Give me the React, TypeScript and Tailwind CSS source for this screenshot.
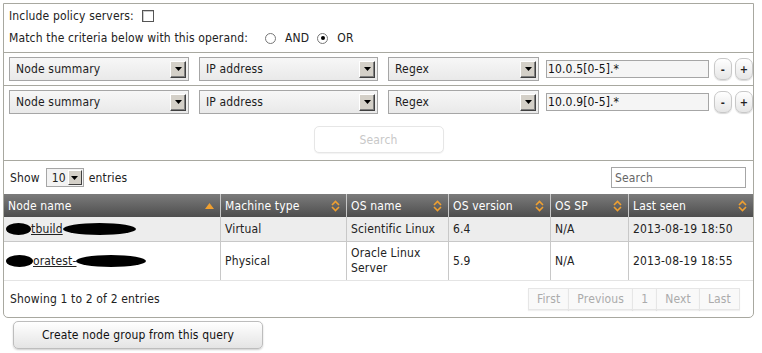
import React from 'react'

const font = { fontFamily: '"DejaVu Sans Condensed", "Liberation Sans", sans-serif' }

function Arrow() {
  return (
    <div className="flex h-[17px] w-[16px] items-center justify-center border border-t-white border-l-white border-b-[#404040] border-r-[#404040] bg-[#d4d0c8] shadow-[inset_-1px_-1px_0_#808080]">
      <svg width="7" height="4" viewBox="0 0 7 4">
        <path d="M0 0H7L3.5 4Z" fill="#000" />
      </svg>
    </div>
  )
}

function Select({ label, width }: { label: string; width: string }) {
  return (
    <div className={`flex h-[24px] ${width} items-center justify-between border border-[#a6a6a6] bg-gradient-to-b from-[#f7f7f7] to-[#e9e9e9] pl-[6px] pr-[2px] text-[12px] text-[#1c1c1c]`}>
      <span>{label}</span>
      <Arrow />
    </div>
  )
}

function RoundBtn({ children }: { children: React.ReactNode }) {
  return (
    <div className="flex h-[22px] w-[18px] items-center justify-center rounded-[7px] border border-[#c8c8c8] bg-gradient-to-b from-white to-[#e6e6e6] text-[11px] font-bold leading-none text-[#222] shadow-[0_1px_1px_rgba(0,0,0,0.15)]">
      {children}
    </div>
  )
}

function CriteriaRow({ value }: { value: string }) {
  return (
    <div className="flex items-center pl-[5px]">
      <Select label="Node summary" width="w-[180px]" />
      <div className="w-[10px]" />
      <Select label="IP address" width="w-[179px]" />
      <div className="w-[10px]" />
      <Select label="Regex" width="w-[151px]" />
      <div className="w-[7px]" />
      <div className="flex h-[18px] w-[163px] items-center border border-[#a6a6a6] bg-[#f5f5f5] pl-[1px] text-[12px] text-[#111]">
        {value}
      </div>
      <div className="w-[5px]" />
      <RoundBtn>-</RoundBtn>
      <div className="w-[3px]" />
      <RoundBtn>+</RoundBtn>
    </div>
  )
}

function SortIcon({ up }: { up?: boolean }) {
  if (up) {
    return (
      <svg width="9" height="6" viewBox="0 0 9 6">
        <path d="M0 6L4.5 0L9 6Z" fill="#f0a030" />
      </svg>
    )
  }
  return (
    <svg width="9" height="12" viewBox="0 0 9 12">
      <path d="M1 5L4.5 1.5L8 5" stroke="#f0a030" strokeWidth="1.6" fill="none" />
      <path d="M1 7L4.5 10.5L8 7" stroke="#f0a030" strokeWidth="1.6" fill="none" />
    </svg>
  )
}

const columns = [
  { name: 'Node name', w: 'w-[216px]', up: true },
  { name: 'Machine type', w: 'w-[126px]' },
  { name: 'OS name', w: 'w-[102px]' },
  { name: 'OS version', w: 'w-[102px]' },
  { name: 'OS SP', w: 'w-[78px]' },
  { name: 'Last seen', w: 'w-[125px]' },
]

// redacted parts of the host names
function Blob({ w }: { w: string }) {
  return <span className={`inline-block h-[12px] ${w} rounded-[50%] bg-black align-middle`} />
}

const rows = [
  {
    node: (
      <>
        <Blob w="w-[25px]" />
        <span>tbuild</span>
        <Blob w="w-[73px]" />
      </>
    ),
    type: 'Virtual',
    os: 'Scientific Linux',
    ver: '6.4',
    sp: 'N/A',
    seen: '2013-08-19 18:50',
    bg: 'bg-[#ededed]',
    h: 'h-[24px]',
  },
  {
    node: (
      <>
        <Blob w="w-[27px]" />
        <span>oratest-</span>
        <Blob w="w-[70px]" />
      </>
    ),
    type: 'Physical',
    os: 'Oracle Linux Server',
    ver: '5.9',
    sp: 'N/A',
    seen: '2013-08-19 18:55',
    bg: 'bg-white',
    h: 'h-[39px]',
  },
]

export default function App() {
  return (
    <div className="h-[353px] w-[762px] overflow-hidden bg-white pl-[3px] pt-[3px] text-[12px] tracking-[0.15px] text-[#222]" style={font}>
      <div className="w-[751px] rounded-b-[5px] border border-[#a8a8a0]">
        <div className="px-[5px] pt-[1px] pb-[3px]">
          <div className="flex h-[22px] items-center">
            <span>Include policy servers:</span>
            <span className="ml-[8px] h-[12px] w-[12px] border border-[#555] bg-white shadow-[inset_1px_1px_0_#ccc]" />
          </div>
          <div className="flex h-[22px] items-center">
            <span>Match the criteria below with this operand:</span>
            <span className="ml-[17px] h-[11px] w-[11px] rounded-full border border-[#777] bg-white" />
            <span className="ml-[9px]">AND</span>
            <span className="ml-[8px] flex h-[11px] w-[11px] items-center justify-center rounded-full border border-[#777] bg-white">
              <span className="h-[4px] w-[4px] rounded-full bg-black" />
            </span>
            <span className="ml-[9px]">OR</span>
          </div>
        </div>

        <div className="border-t border-[#a8a8a0] py-[4px]">
          <CriteriaRow value="10.0.5[0-5].*" />
        </div>

        <div className="border-t border-[#a8a8a0] pt-[4px] pb-[7px]">
          <CriteriaRow value="10.0.9[0-5].*" />
          <div className="mt-[12px] flex justify-center">
            <div className="flex h-[27px] w-[130px] items-center justify-center rounded-[5px] border border-[#e6e6e6] bg-white text-[12px] text-[#c8c8c8] shadow-[0_1px_1px_rgba(0,0,0,0.05)]">
              Search
            </div>
          </div>
        </div>

        <div className="border-t border-[#a8a8a0]">
          <div className="flex h-[33px] items-center justify-between px-[6px]">
            <div className="flex items-center">
              <span>Show</span>
              <div className="ml-[6px] flex h-[19px] w-[38px] items-center justify-between border border-[#a6a6a6] bg-[#f3f3f3] pl-[5px] pr-[1px]">
                <span>10</span>
                <div className="flex h-[15px] w-[14px] items-center justify-center border border-t-white border-l-white border-b-[#404040] border-r-[#404040] bg-[#d4d0c8]">
                  <svg width="7" height="4" viewBox="0 0 7 4">
                    <path d="M0 0H7L3.5 4Z" fill="#000" />
                  </svg>
                </div>
              </div>
              <span className="ml-[5px]">entries</span>
            </div>
            <div className="mr-[1px] flex h-[21px] w-[135px] items-center border border-[#a6a6a6] bg-white pl-[3px] text-[#666]">
              Search
            </div>
          </div>

          <div className="flex h-[23px] bg-gradient-to-b from-[#7c7c7c] to-[#4e4e4e] text-[12px] text-white">
            {columns.map((c, i) => (
              <div
                key={c.name}
                className={`flex ${c.w} items-center justify-between pl-[4px] pr-[6px] ${i > 0 ? 'border-l border-[#c8c8c8]' : ''}`}
              >
                <span>{c.name}</span>
                <SortIcon up={c.up} />
              </div>
            ))}
          </div>

          {rows.map((r, ri) => (
            <div key={ri} className={`flex ${r.h} ${r.bg} ${ri > 0 ? 'border-t border-[#c8c8c8]' : ''}`}>
              <div className="flex w-[216px] items-center pl-[2px]">
                <span className="flex items-center underline">{r.node}</span>
              </div>
              <div className="flex w-[126px] items-center border-l border-[#c8c8c8] pl-[4px]">{r.type}</div>
              <div className="flex w-[102px] items-center border-l border-[#c8c8c8] pl-[4px] pr-[6px] leading-[15px]">{r.os}</div>
              <div className="flex w-[102px] items-center border-l border-[#c8c8c8] pl-[4px]">{r.ver}</div>
              <div className="flex w-[78px] items-center border-l border-[#c8c8c8] pl-[4px]">{r.sp}</div>
              <div className="flex w-[125px] items-center border-l border-[#c8c8c8] pl-[4px]">{r.seen}</div>
            </div>
          ))}

          <div className="flex h-[37px] items-center justify-between border-t border-[#e4e4e4] px-[6px]">
            <span>Showing 1 to 2 of 2 entries</span>
            <div className="mr-[7px] flex h-[22px] text-[#ababab]">
              {['First', 'Previous', '1', 'Next', 'Last'].map((p) => (
                <div
                  key={p}
                  className="flex items-center border border-[#e6e6e6] bg-[#f9f9f9] px-[8px] -ml-px shadow-[0_1px_1px_rgba(0,0,0,0.06)]"
                >
                  {p}
                </div>
              ))}
            </div>
          </div>
        </div>
      </div>

      <div className="ml-[10px] mt-[3px] flex h-[28px] w-[250px] items-center justify-center rounded-[5px] border border-[#bdbdbd] bg-gradient-to-b from-white to-[#e4e4e4] text-[12px] text-[#111] shadow-[0_1px_2px_rgba(0,0,0,0.2)]">
        Create node group from this query
      </div>
    </div>
  )
}
